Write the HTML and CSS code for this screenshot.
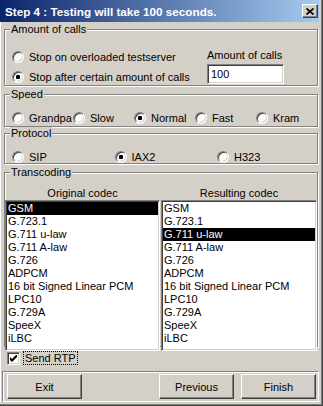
FILE: index.html
```html
<!DOCTYPE html>
<html lang="en">
<head>
  <meta charset="UTF-8">
  <title>Step 4</title>
  <link rel="stylesheet" href="styles.css">
</head>
<body>
  <div class="window">
    <div class="titlebar">
      <span class="title">Step 4 : Testing will take 100 seconds.</span>
      <span class="close">
        <svg width="8" height="7" viewBox="0 0 8 7"><path d="M0.5 0.5 L7.5 6.5 M7.5 0.5 L0.5 6.5" stroke="#000" stroke-width="1.7" fill="none"/></svg>
      </span>
    </div>

    <div class="client">
      <div class="group group-calls">
        <div class="legend">Amount of calls</div>
        <div class="calls-body">
          <div class="radios">
            <label class="opt"><span class="radio"></span>Stop on overloaded testserver</label>
            <label class="opt"><span class="radio on"></span>Stop after certain amount of calls</label>
          </div>
          <div class="amount">
            <div class="amount-label">Amount of calls</div>
            <div class="edit">100</div>
          </div>
        </div>
      </div>

      <div class="group group-speed">
        <div class="legend">Speed</div>
        <div class="row speed-row">
          <label class="opt"><span class="radio"></span>Grandpa</label>
          <label class="opt"><span class="radio"></span>Slow</label>
          <label class="opt"><span class="radio on"></span>Normal</label>
          <label class="opt"><span class="radio"></span>Fast</label>
          <label class="opt"><span class="radio"></span>Kram</label>
        </div>
      </div>

      <div class="group group-proto">
        <div class="legend">Protocol</div>
        <div class="row proto-row">
          <label class="opt"><span class="radio"></span>SIP</label>
          <label class="opt"><span class="radio on"></span>IAX2</label>
          <label class="opt"><span class="radio"></span>H323</label>
        </div>
      </div>

      <div class="group group-codec">
        <div class="legend">Transcoding</div>
        <div class="codec-grid">
          <div class="codec-head">Original codec</div>
          <div class="codec-head">Resulting codec</div>
          <ul class="listbox">
            <li class="sel">GSM</li>
            <li>G.723.1</li>
            <li>G.711 u-law</li>
            <li>G.711 A-law</li>
            <li>G.726</li>
            <li>ADPCM</li>
            <li>16 bit Signed Linear PCM</li>
            <li>LPC10</li>
            <li>G.729A</li>
            <li>SpeeX</li>
            <li>iLBC</li>
          </ul>
          <ul class="listbox">
            <li>GSM</li>
            <li>G.723.1</li>
            <li class="sel">G.711 u-law</li>
            <li>G.711 A-law</li>
            <li>G.726</li>
            <li>ADPCM</li>
            <li>16 bit Signed Linear PCM</li>
            <li>LPC10</li>
            <li>G.729A</li>
            <li>SpeeX</li>
            <li>iLBC</li>
          </ul>
        </div>
      </div>

      <div class="check-row">
        <span class="checkbox">
          <svg width="7" height="7" viewBox="0 0 7 7"><path d="M0 2 L2 4 L7 -1 L7 2 L2 7 L0 5 Z" fill="#000"/></svg>
        </span>
        <span class="focus">Send RTP</span>
      </div>

      <div class="panel">
        <button class="btn">Exit</button>
        <button class="btn btn-prev">Previous</button>
        <button class="btn">Finish</button>
      </div>
    </div>
  </div>
</body>
</html>
```

FILE: styles.css
```css
body {
  margin: 0;
  background: #d4d0c8;
  font-family: "Liberation Sans", Arial, sans-serif;
  font-size: 11px;
  color: #000;
}
.window {
  width: 323px;
  height: 406px;
  box-sizing: border-box;
  background: #d4d0c8;
  border-right: 1px solid #404040;
  border-bottom: 1px solid #404040;
  padding: 0 3px 3px 0;
  box-shadow: inset -1px -1px 0 #808080;
  display: flex;
  flex-direction: column;
}
.titlebar {
  height: 22px;
  background: linear-gradient(to right, #0a246a, #a6caf0);
  display: flex;
  align-items: center;
  padding-left: 5px;
  padding-right: 1px;
}
.title {
  flex: 1;
  color: #fff;
  font-weight: bold;
  font-size: 11.7px;
}
.close {
  width: 16px;
  height: 14px;
  box-sizing: border-box;
  background: #d4d0c8;
  border: 1px solid;
  border-color: #fff #404040 #404040 #fff;
  box-shadow: inset -1px -1px 0 #808080;
  display: flex;
  align-items: center;
  justify-content: center;
}
.client {
  flex: 1;
  display: flex;
  flex-direction: column;
  border-left: 1px solid #fff;
}

/* group boxes */
.group {
  width: 314px;
  box-sizing: border-box;
  margin-left: 3px;
  border: 1px solid #808080;
  box-shadow: inset 1px 1px 0 #fff, 1px 1px 0 #fff;
}
.legend {
  display: inline-block;
  height: 13px;
  line-height: 13px;
  margin: -7px 0 0 5px;
  padding: 0 1px;
  background: #d4d0c8;
  vertical-align: top;
}
.group-calls { margin-top: 7px; height: 57px; }
.group-speed { margin-top: 8px; height: 33px; }
.group-proto { margin-top: 6px; height: 31px; }
.group-codec { margin-top: 8px; height: 175px; }

.calls-body {
  display: grid;
  grid-template-columns: 195px auto;
  padding: 5px 0 0 7px;
}
.radios .opt { height: 20px; }
.amount { margin-top: 2px; }
.amount-label { height: 13px; line-height: 13px; }
.edit {
  margin-top: 2px;
  width: 77px;
  height: 20px;
  box-sizing: border-box;
  background: #fff;
  border: 1px solid;
  border-color: #808080 #fff #fff #808080;
  box-shadow: inset 1px 1px 0 #404040, inset -1px -1px 0 #d4d0c8;
  padding: 0 0 0 3px;
  line-height: 18px;
}

.opt {
  display: flex;
  align-items: center;
  gap: 5px;
  white-space: nowrap;
}
.radio {
  width: 12px;
  height: 12px;
  box-sizing: border-box;
  border-radius: 50%;
  border: 1px solid;
  border-color: #808080 #fff #fff #808080;
  background: #fff;
  box-shadow: inset 1px 1px 0 #404040, inset -1px -1px 0 #d4d0c8;
  display: inline-flex;
  align-items: center;
  justify-content: center;
  flex: none;
}
.radio.on::after {
  content: "";
  width: 4px;
  height: 4px;
  border-radius: 1px;
  background: #000;
}

.row {
  display: grid;
  height: 16px;
  margin-top: 3px;
  padding-left: 7px;
}
.row .opt { height: 16px; }
.speed-row { grid-template-columns: repeat(5, 61px); }
.proto-row { grid-template-columns: repeat(3, 102.5px); }

/* transcoding lists */
.codec-grid {
  display: grid;
  grid-template-columns: 155px 156px;
  column-gap: 1px;
  margin-top: 2px;
}
.codec-head {
  height: 13px;
  line-height: 13px;
  text-align: center;
}
.listbox {
  list-style: none;
  margin: 0;
  padding: 0;
  height: 151px;
  box-sizing: border-box;
  background: #fff;
  border: 1px solid;
  border-color: #808080 #fff #fff #808080;
  box-shadow: inset 1px 1px 0 #404040, inset -1px -1px 0 #d4d0c8;
  padding: 1px;
}
.listbox li {
  height: 13px;
  line-height: 13px;
  padding-left: 1px;
  white-space: nowrap;
}
.listbox li.sel {
  background: #000;
  color: #fff;
}

.check-row {
  display: flex;
  align-items: center;
  margin: 4px 0 0 6px;
  height: 14px;
}
.checkbox {
  width: 13px;
  height: 13px;
  box-sizing: border-box;
  background: #fff;
  border: 1px solid;
  border-color: #808080 #fff #fff #808080;
  box-shadow: inset 1px 1px 0 #404040, inset -1px -1px 0 #d4d0c8;
  display: flex;
  align-items: center;
  justify-content: center;
  margin-right: 3px;
}
.focus {
  outline: 1px dotted #000;
  outline-offset: -1px;
  padding: 0 2px;
  height: 14px;
  line-height: 14px;
}

/* button panel */
.panel {
  flex: 1;
  margin: 6px 0 0 1px;
  border: 1px solid;
  border-color: #808080 #fff #fff #808080;
  box-shadow: inset 1px 1px 0 #fff;
  display: flex;
  align-items: flex-start;
  padding: 2px 2px 0 4px;
  gap: 7px;
}
.btn {
  width: 75px;
  height: 25px;
  box-sizing: border-box;
  background: #d4d0c8;
  border: 1px solid;
  border-color: #fff #404040 #404040 #fff;
  box-shadow: inset -1px -1px 0 #808080;
  font-family: inherit;
  font-size: 11px;
  color: #000;
  padding: 0;
}
.btn-prev { margin-left: auto; }
```
